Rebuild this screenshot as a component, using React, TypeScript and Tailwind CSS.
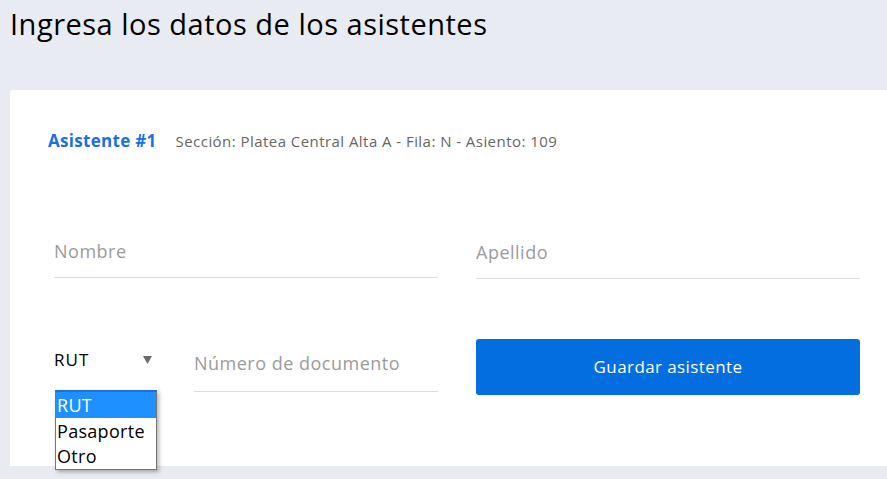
import React from 'react'

const font = { fontFamily: '"Open Sans", "Noto Sans", sans-serif' }

const UnderlineInput = ({ placeholder, className }: { placeholder: string; className?: string }) => (
  <div className={`border-b border-[#dcdcdc] flex items-center ${className ?? ''}`}>
    <span className="text-[18px] text-[#9b9b9b] tracking-[0.5px]">{placeholder}</span>
  </div>
)

const App = () => {
  return (
    <div className="min-h-[479px] bg-[#e8ebf2] overflow-hidden" style={font}>
      <div className="h-[90px] pl-[10px] pt-[4px]">
        <h1 className="text-[29px] leading-[40px] text-black tracking-[0.5px]">Ingresa los datos de los asistentes</h1>
      </div>

      <div className="ml-[10px] h-[376px] bg-white rounded-tl-[3px] pl-[38px] pr-[27px] pt-[38px]">
        <div className="flex items-baseline gap-[19px] h-[28px]">
          <span className="text-[17px] font-bold text-[#1b6fe0] tracking-[0.3px]">Asistente #1</span>
          <span className="text-[15px] text-[#666666] tracking-[0.45px]">Sección: Platea Central Alta A - Fila: N - Asiento: 109</span>
        </div>

        <div className="pl-[6px] mt-[72px] grid grid-cols-2 gap-x-[38px]">
          <UnderlineInput placeholder="Nombre" className="h-[50px] pb-[2px]" />
          <UnderlineInput placeholder="Apellido" className="h-[51px] pb-[2px]" />
        </div>

        <div className="pl-[6px] mt-[61px] grid grid-cols-2 gap-x-[38px]">
          <div className="flex">
            <div className="relative w-[110px] h-[40px] flex items-center justify-between pr-[12px]">
              <span className="text-[17px] text-black tracking-[1px]">RUT</span>
              <svg width="9" height="8" viewBox="0 0 9 8" className="mt-[-1px]">
                <path d="M0 0 L9 0 L4.5 8 Z" fill="#6b6b6b" />
              </svg>
              <div className="absolute left-[1px] top-[50px] w-[102px] bg-white border border-[#767676] border-t-[2px] border-t-[#1f6fd8] shadow-[2px_2px_4px_rgba(0,0,0,0.3)] z-10">
                <div className="bg-[#1e90ff] text-white text-[18px] leading-[26px] pl-[1px] tracking-[0.3px]">RUT</div>
                <div className="text-black text-[18px] leading-[26px] pl-[1px] tracking-[0.3px]">Pasaporte</div>
                <div className="text-black text-[18px] leading-[25px] pl-[1px] tracking-[0.3px]">Otro</div>
              </div>
            </div>
            <UnderlineInput placeholder="Número de documento" className="ml-[30px] flex-1 h-[52px] pb-[4px]" />
          </div>
          <button className="h-[56px] rounded-[3px] bg-[#036ee0] text-white text-[17px] tracking-[0.4px] -mt-[1px]">
            Guardar asistente
          </button>
        </div>
      </div>
    </div>
  )
}

export default App
